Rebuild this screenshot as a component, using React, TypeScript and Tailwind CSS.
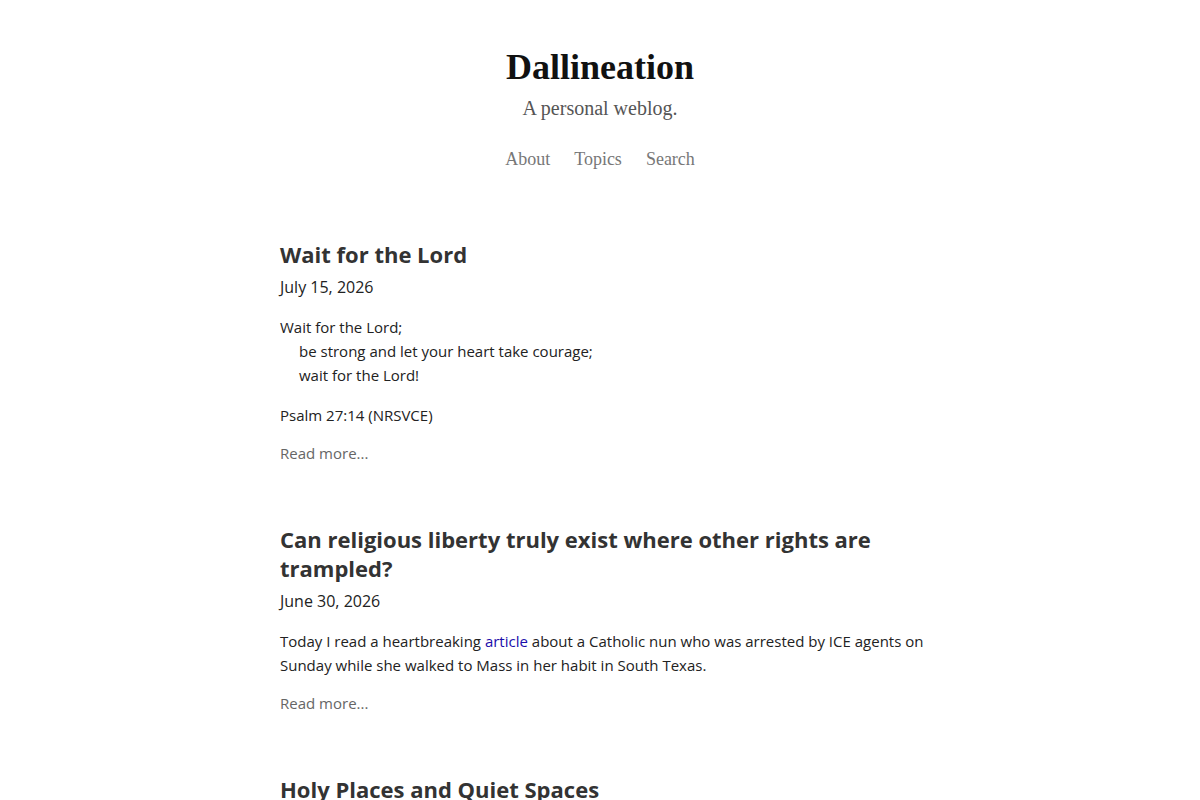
import React from 'react';

const serif = { fontFamily: '"Liberation Serif", "DejaVu Serif", serif' };

type Post = {
  title: string;
  date: string;
  body: React.ReactNode;
};

const posts: Post[] = [
  {
    title: 'Wait for the Lord',
    date: 'July 15, 2026',
    body: (
      <>
        <p className="leading-6">
          Wait for the Lord;
          <br />
          <span className="pl-[19px]">be strong and let your heart take courage;</span>
          <br />
          <span className="pl-[19px]">wait for the Lord!</span>
        </p>
        <p className="mt-4 leading-6">Psalm 27:14 (NRSVCE)</p>
      </>
    ),
  },
  {
    title: 'Can religious liberty truly exist where other rights are trampled?',
    date: 'June 30, 2026',
    body: (
      <p className="leading-6">
        Today I read a heartbreaking{' '}
        <a href="#" className="text-[#1a0dab]">
          article
        </a>{' '}
        about a Catholic nun who was arrested by ICE agents on Sunday while she walked to Mass in her habit in South
        Texas.
      </p>
    ),
  },
  {
    title: 'Holy Places and Quiet Spaces',
    date: 'June 12, 2026',
    body: <p className="leading-6">A few thoughts on finding stillness.</p>,
  },
];

function PostEntry({ post }: { post: Post }) {
  return (
    <article className="mb-[60px]">
      <h2 className="text-[22px] font-bold leading-[29px] text-[#333]">{post.title}</h2>
      <div className="mt-[6px] text-[16px] leading-6 text-[#222]">{post.date}</div>
      <div className="mt-[16px] -mr-[24px] text-[15px] text-[#222]">{post.body}</div>
      <a href="#" className="mt-[14px] block text-[15px] leading-6 text-[#666]">
        Read more...
      </a>
    </article>
  );
}

export default function App() {
  return (
    <div className="min-h-screen bg-white" style={{ fontFamily: '"Open Sans", sans-serif' }}>
      <header className="pt-[45px] text-center">
        <h1 className="text-[36px] font-bold leading-[44px] text-[#111]" style={serif}>
          Dallineation
        </h1>
        <p className="mt-[7px] text-[20px] leading-6 text-[#555]" style={serif}>
          A personal weblog.
        </p>
        <nav className="mt-[27px] flex justify-center gap-6 text-[18px] leading-6 text-[#777]" style={serif}>
          <a href="#">About</a>
          <a href="#">Topics</a>
          <a href="#">Search</a>
        </nav>
      </header>
      <main className="mx-auto mt-[69px] w-[640px]">
        {posts.map((p) => (
          <PostEntry key={p.title} post={p} />
        ))}
      </main>
    </div>
  );
}
